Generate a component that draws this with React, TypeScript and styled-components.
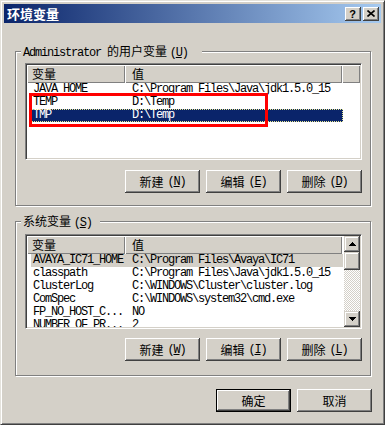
import styled, { createGlobalStyle } from 'styled-components';

const CJK = `"Noto Sans CJK SC", "Noto Sans CJK JP", sans-serif`;
const MONO = `"Liberation Mono", "Noto Sans CJK SC", monospace`;

const GlobalStyle = createGlobalStyle`
    html, body {
        margin: 0;
        padding: 0;
        background: #d4d0c8;
    }
    body {
        font-family: ${CJK};
        font-size: 12px;
        color: #000;
    }
    * {
        box-sizing: border-box;
    }
`;

const raised = `
    background: #d4d0c8;
    box-shadow: inset -1px -1px #404040, inset 1px 1px #fff, inset -2px -2px #808080;
`;

const Window = styled.div`
    width: 385px;
    height: 425px;
    padding: 3px;
    border: 1px solid;
    border-color: #e4e2dc #404040 #404040 #e4e2dc;
    box-shadow: inset 1px 1px #fff, inset -1px -1px #808080;
    background: #d4d0c8;
    display: flex;
    flex-direction: column;
`;

const TitleBar = styled.div`
    height: 19px;
    display: flex;
    align-items: center;
    padding: 0 2px 0 3px;
    background: linear-gradient(to right, #0a246a, #a6caf0);
`;

const Title = styled.div`
    color: #fff;
    font-family: ${CJK};
    font-weight: bold;
    font-size: 13px;
    line-height: 19px;
`;

const TitleButtons = styled.div`
    margin-left: auto;
    display: flex;
    gap: 2px;
`;

const CaptionButton = styled.div`
    ${raised}
    width: 16px;
    height: 14px;
    display: flex;
    align-items: center;
    justify-content: center;
    font-family: "Liberation Sans", sans-serif;
    font-weight: bold;
    font-size: 11px;
    line-height: 14px;
    padding-right: 1px;
`;

const Content = styled.div`
    padding: 0 10px 0 11px;
    display: flex;
    flex-direction: column;
`;

const Group = styled.div<{ $top: number; $padTop: number; $padBottom: number }>`
    position: relative;
    margin-top: ${(p) => p.$top}px;
    border: 1px solid #808080;
    box-shadow: inset 1px 1px #fff, 1px 1px #fff;
    padding: ${(p) => p.$padTop}px 8px ${(p) => p.$padBottom}px 9px;
    display: flex;
    flex-direction: column;
`;

const GroupLabel = styled.div<{ $padRight: number }>`
    position: absolute;
    top: -8px;
    left: 5px;
    height: 14px;
    padding: 0 ${(p) => p.$padRight}px 0 2px;
    background: #d4d0c8;
    font-family: ${CJK};
    font-size: 12px;
    line-height: 14px;
    white-space: nowrap;
`;

const Latin = styled.span`
    font-family: ${MONO};
    font-size: 12px;
    letter-spacing: -1.2px;
`;

const Key = styled.span`
    text-decoration: underline;
    text-underline-offset: 1px;
`;

const ListBox = styled.div<{ $height: number }>`
    position: relative;
    height: ${(p) => p.$height}px;
    padding: 1px;
    border: 1px solid;
    border-color: #808080 #fff #fff #808080;
    box-shadow: inset 1px 1px #404040, inset -1px -1px #d4d0c8;
    background: #fff;
    display: flex;
    overflow: hidden;
`;

const ListBody = styled.div`
    flex: 1;
    display: flex;
    flex-direction: column;
    overflow: hidden;
`;

const Header = styled.div`
    display: flex;
    height: 18px;
    flex-shrink: 0;
`;

const HeaderCell = styled.div<{ $width?: number; $pad: number }>`
    ${raised}
    box-shadow: inset 1px 1px #fff, inset -1px -1px #808080;
    width: ${(p) => (p.$width ? `${p.$width}px` : 'auto')};
    flex: ${(p) => (p.$width ? '0 0 auto' : '1')};
    padding-left: ${(p) => p.$pad}px;
    font-family: ${CJK};
    font-size: 12px;
    line-height: 17px;
`;

const Row = styled.div<{ $sel?: 'active' | 'inactive' }>`
    display: flex;
    height: 13px;
    width: 312px;
    margin-left: 4px;
    flex-shrink: 0;
    font-family: ${MONO};
    font-size: 12px;
    letter-spacing: -1.2px;
    line-height: 13px;
    white-space: nowrap;
    background: ${(p) => (p.$sel === 'active' ? '#0a246a' : p.$sel === 'inactive' ? '#d4d0c8' : 'transparent')};
    color: ${(p) => (p.$sel === 'active' ? '#fff' : '#000')};
    outline: ${(p) => (p.$sel === 'active' ? '1px dotted #e8e890' : 'none')};
    outline-offset: -1px;
`;

const NameCell = styled.div`
    width: 94px;
    padding-left: 2px;
    overflow: hidden;
`;

const ValueCell = styled.div`
    flex: 1;
    padding-left: 7px;
    overflow: hidden;
`;

const ScrollBar = styled.div`
    width: 16px;
    display: flex;
    flex-direction: column;
`;

const ScrollArrow = styled.div`
    ${raised}
    box-shadow: inset -1px -1px #404040, inset 1px 1px #d4d0c8, inset -2px -2px #808080, inset 2px 2px #fff;
    height: 16px;
    display: flex;
    align-items: center;
    justify-content: center;
`;

const Thumb = styled.div`
    ${raised}
    box-shadow: inset -1px -1px #404040, inset 1px 1px #d4d0c8, inset -2px -2px #808080, inset 2px 2px #fff;
    height: 18px;
`;

const Track = styled.div`
    flex: 1;
    background: repeating-conic-gradient(#fff 0 25%, #d4d0c8 0 50%) 0 0 / 2px 2px;
`;

const Mark = styled.div`
    position: absolute;
    left: 3px;
    top: 29px;
    width: 239px;
    height: 34px;
    border: 3px solid #ff0000;
    pointer-events: none;
`;

const ButtonRow = styled.div<{ $top: number }>`
    display: flex;
    justify-content: flex-end;
    gap: 6px;
    margin-top: ${(p) => p.$top}px;
`;

const Button = styled.div<{ $default?: boolean }>`
    ${raised}
    width: 75px;
    height: 23px;
    display: flex;
    align-items: center;
    justify-content: center;
    gap: 4px;
    font-family: ${CJK};
    font-size: 12px;
    border: ${(p) => (p.$default ? '1px solid #000' : 'none')};
`;

const DialogButtons = styled(ButtonRow)`
    margin-right: -1px;
`;

const Arrow = ({ down }: { down?: boolean }) => (
    <svg width="7" height="4" viewBox="0 0 7 4" shapeRendering="crispEdges">
        <path d={down ? 'M0 0H7L3.5 4Z' : 'M3.5 0L7 4H0Z'} fill="#000" />
    </svg>
);

const CloseGlyph = () => (
    <svg width="8" height="7" viewBox="0 0 8 7">
        <path d="M0.5 0.5L7.5 6.5M7.5 0.5L0.5 6.5" stroke="#000" strokeWidth="1.6" />
    </svg>
);

type Item = { name: string; value: string; sel?: 'active' | 'inactive' };

const userVars: Item[] = [
    { name: 'JAVA_HOME', value: 'C:\\Program Files\\Java\\jdk1.5.0_15' },
    { name: 'TEMP', value: 'D:\\Temp' },
    { name: 'TMP', value: 'D:\\Temp', sel: 'active' },
];

const systemVars: Item[] = [
    { name: 'AVAYA_IC71_HOME', value: 'C:\\Program Files\\Avaya\\IC71', sel: 'inactive' },
    { name: 'classpath', value: 'C:\\Program Files\\Java\\jdk1.5.0_15' },
    { name: 'ClusterLog', value: 'C:\\WINDOWS\\Cluster\\cluster.log' },
    { name: 'ComSpec', value: 'C:\\WINDOWS\\system32\\cmd.exe' },
    { name: 'FP_NO_HOST_C...', value: 'NO' },
    { name: 'NUMBER_OF_PR...', value: '2' },
];

const Label = ({ text, k }: { text: string; k: string }) => (
    <>
        <span>{text}</span>
        <Latin>
            (<Key>{k}</Key>)
        </Latin>
    </>
);

const Rows = ({ items }: { items: Item[] }) => (
    <>
        {items.map((it) => (
            <Row key={it.name} $sel={it.sel}>
                <NameCell>{it.name}</NameCell>
                <ValueCell>{it.value}</ValueCell>
            </Row>
        ))}
    </>
);

const ColumnHeader = ({ rest }: { rest: boolean }) => (
    <Header>
        <HeaderCell $width={98} $pad={5}>变量</HeaderCell>
        <HeaderCell $width={217} $pad={7}>值</HeaderCell>
        {rest && <HeaderCell $pad={0} />}
    </Header>
);

export default function App() {
    return (
        <>
            <GlobalStyle />
            <Window>
                <TitleBar>
                    <Title>环境变量</Title>
                    <TitleButtons>
                        <CaptionButton>?</CaptionButton>
                        <CaptionButton>
                            <CloseGlyph />
                        </CaptionButton>
                    </TitleButtons>
                </TitleBar>
                <Content>
                    <Group $top={28} $padTop={11} $padBottom={12}>
                        <GroupLabel $padRight={14}>
                            <Latin>Administrator </Latin>的用户变量 <Latin>(<Key>U</Key>)</Latin>
                        </GroupLabel>
                        <ListBox $height={97}>
                            <ListBody>
                                <ColumnHeader rest />
                                <Rows items={userVars} />
                            </ListBody>
                            <Mark />
                        </ListBox>
                        <ButtonRow $top={10}>
                            <Button><Label text="新建" k="N" /></Button>
                            <Button><Label text="编辑" k="E" /></Button>
                            <Button><Label text="删除" k="D" /></Button>
                        </ButtonRow>
                    </Group>
                    <Group $top={15} $padTop={12} $padBottom={14}>
                        <GroupLabel $padRight={8}>
                            系统变量 <Latin>(<Key>S</Key>)</Latin>
                        </GroupLabel>
                        <ListBox $height={95}>
                            <ListBody>
                                <ColumnHeader rest={false} />
                                <Rows items={systemVars} />
                            </ListBody>
                            <ScrollBar>
                                <ScrollArrow><Arrow /></ScrollArrow>
                                <Thumb />
                                <Track />
                                <ScrollArrow><Arrow down /></ScrollArrow>
                            </ScrollBar>
                        </ListBox>
                        <ButtonRow $top={9}>
                            <Button><Label text="新建" k="W" /></Button>
                            <Button><Label text="编辑" k="I" /></Button>
                            <Button><Label text="删除" k="L" /></Button>
                        </ButtonRow>
                    </Group>
                    <DialogButtons $top={13}>
                        <Button $default>确定</Button>
                        <Button>取消</Button>
                    </DialogButtons>
                </Content>
            </Window>
        </>
    );
}
